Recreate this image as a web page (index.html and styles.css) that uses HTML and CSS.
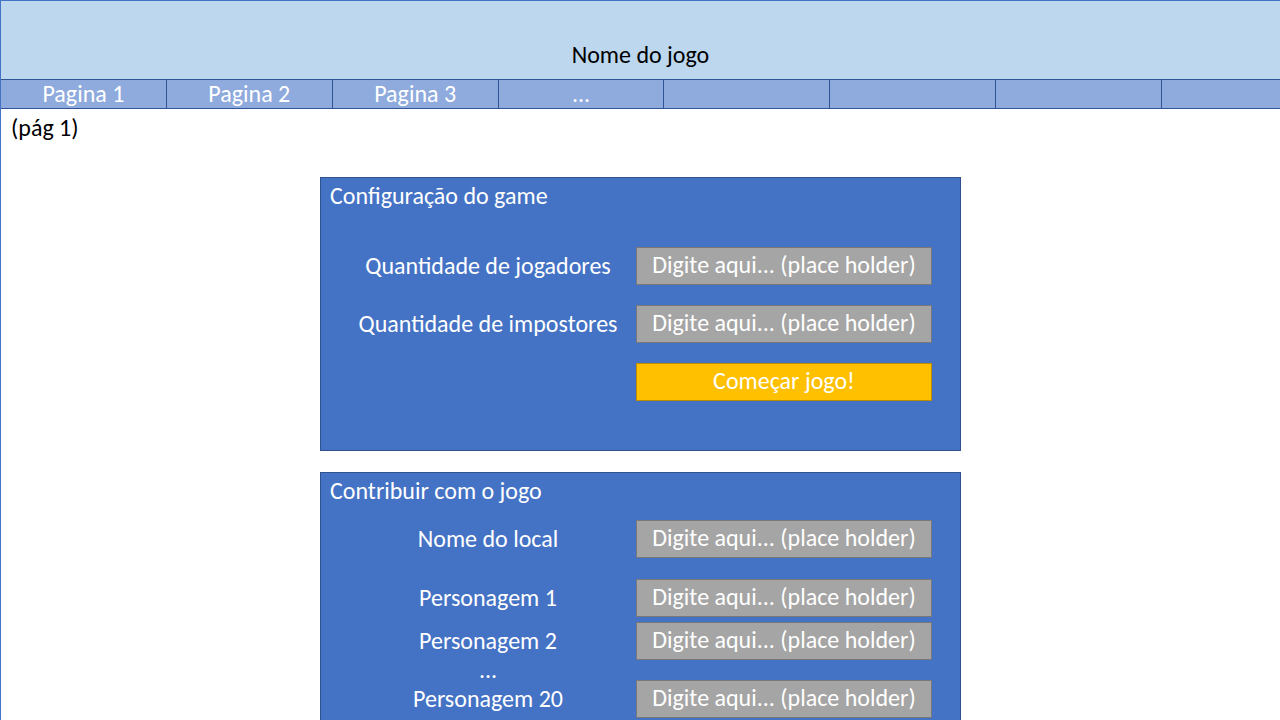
FILE: index.html
```html
<!DOCTYPE html>
<html lang="pt">
<head>
<meta charset="utf-8">
<title>Nome do jogo</title>
<link rel="stylesheet" href="styles.css">
</head>
<body>
<div class="slide">
  <header class="top">
    <h1 class="game-title">Nome do jogo</h1>
  </header>
  <nav class="tabs">
    <a class="tab">Pagina 1</a>
    <a class="tab">Pagina 2</a>
    <a class="tab">Pagina 3</a>
    <a class="tab">...</a>
    <a class="tab"></a>
    <a class="tab"></a>
    <a class="tab"></a>
    <a class="tab"></a>
  </nav>
  <main class="content">
    <p class="page-tag">(pág 1)</p>

    <section class="card card-config">
      <h2 class="card-title">Configuração do game</h2>
      <div class="form form-config">
        <div class="row">
          <span class="field-label">Quantidade de jogadores</span>
          <span class="field">Digite aqui... (place holder)</span>
        </div>
        <div class="row">
          <span class="field-label">Quantidade de impostores</span>
          <span class="field">Digite aqui... (place holder)</span>
        </div>
        <div class="row">
          <span class="field-label"></span>
          <span class="btn">Começar jogo!</span>
        </div>
      </div>
    </section>

    <section class="card card-contrib">
      <h2 class="card-title">Contribuir com o jogo</h2>
      <div class="form form-contrib">
        <div class="row row-wide">
          <span class="field-label">Nome do local</span>
          <span class="field">Digite aqui... (place holder)</span>
        </div>
        <div class="row">
          <span class="field-label">Personagem 1</span>
          <span class="field">Digite aqui... (place holder)</span>
        </div>
        <div class="row">
          <span class="field-label">Personagem 2</span>
          <span class="field">Digite aqui... (place holder)</span>
        </div>
        <div class="row row-dots">
          <span class="field-label dots">...</span>
        </div>
        <div class="row">
          <span class="field-label">Personagem 20</span>
          <span class="field">Digite aqui... (place holder)</span>
        </div>
      </div>
    </section>
  </main>
</div>
</body>
</html>
```

FILE: styles.css
```css
* {
  box-sizing: border-box;
}

html, body {
  margin: 0;
  padding: 0;
  background: #ffffff;
}

body {
  font-family: "Carlito", "Calibri", "Lato", sans-serif;
  font-size: 24px;
  color: #000000;
}

.slide {
  width: 1280px;
  height: 720px;
  overflow: hidden;
  border-left: 1px solid #4472c4;
  display: flex;
  flex-direction: column;
}

.top {
  height: 79px;
  flex: 0 0 79px;
  background: #bdd7ee;
  border-top: 1px solid #4472c4;
  padding-top: 39px;
}

.game-title {
  margin: 0;
  font-size: 24px;
  font-weight: normal;
  line-height: 29px;
  text-align: center;
  color: #000000;
}

.tabs {
  display: flex;
  flex: 0 0 30px;
  height: 30px;
  background: #8faadc;
  border-top: 1px solid #2f5597;
  border-bottom: 1px solid #2f5597;
}

.tab {
  flex: 0 0 165.86px;
  width: 165.86px;
  border-right: 1px solid #2f5597;
  color: #ffffff;
  text-align: center;
  line-height: 27px;
  font-size: 24px;
}

.content {
  flex: 1 1 auto;
  display: flex;
  flex-direction: column;
}

.page-tag {
  margin: 0;
  padding: 4px 0 0 10px;
  line-height: 29px;
}

.card {
  width: 641px;
  margin-left: 319px;
  background: #4472c4;
  border: 1px solid #2f528f;
  color: #ffffff;
  padding: 3px 0 0 9px;
  flex: 0 0 auto;
}

.card-config {
  margin-top: 35px;
  height: 274px;
}

.card-contrib {
  margin-top: 21px;
  height: 274px;
}

.card-title {
  margin: 0;
  font-size: 24px;
  font-weight: normal;
  line-height: 29px;
}

.form {
  display: flex;
  flex-direction: column;
  gap: 20px;
  margin-left: 10px;
}

.form-config {
  margin-top: 37px;
}

.form-contrib {
  margin-top: 15px;
  gap: 5px;
}

.row {
  display: grid;
  grid-template-columns: 296px 296px;
  align-items: center;
  height: 38px;
}

.row-wide {
  margin-bottom: 16px;
}

.row-dots {
  height: 15px;
  margin-bottom: -5px;
}

.field-label {
  text-align: center;
  line-height: 29px;
  padding-bottom: 1px;
}

.dots {
  line-height: 10px;
  padding-bottom: 7px;
}

.field,
.btn {
  height: 38px;
  line-height: 34px;
  text-align: center;
  color: #ffffff;
  white-space: nowrap;
}

.field {
  background: #a5a5a5;
  border: 1px solid #787878;
}

.btn {
  background: #ffc000;
  border: 1px solid #bc8c00;
}
```
